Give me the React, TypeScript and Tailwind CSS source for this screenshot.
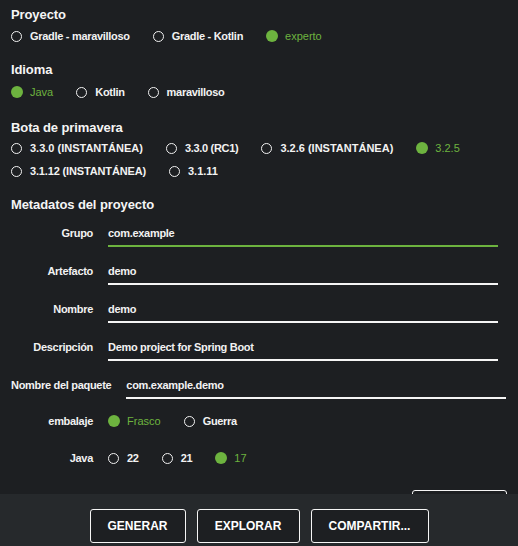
import React from "react";

const font = { fontFamily: '"Liberation Sans", Arial, sans-serif' };

type Opt = { label: string; checked?: boolean; track?: string };

function Radio({ label, checked, track = "tracking-[-0.3px]" }: Opt) {
  return (
    <span className={`flex items-center ${checked ? "gap-[7px]" : "gap-[8px]"}`}>
      {checked ? (
        <span className="h-[12px] w-[12px] rounded-full bg-[#6db33f]" />
      ) : (
        <span className="h-[11px] w-[11px] rounded-full border-[1.5px] border-[#f2f2f2]" />
      )}
      <span className={checked ? "text-[11px] text-[#6db33f]" : `text-[11px] font-bold text-[#f2f2f2] ${track}`}>
        {label}
      </span>
    </span>
  );
}

function RadioRow({ items, className = "" }: { items: Opt[]; className?: string }) {
  return (
    <div className={`flex h-[20px] items-center gap-[23px] ${className}`}>
      {items.map((o) => (
        <Radio key={o.label} {...o} />
      ))}
    </div>
  );
}

function Heading({ children, className = "" }: { children: React.ReactNode; className?: string }) {
  return (
    <h2 className={`h-[20px] text-[13px] font-bold leading-[20px] tracking-[-0.1px] text-[#f5f5f5] ${className}`}>
      {children}
    </h2>
  );
}

function Field({
  label,
  value,
  focused,
  width = "w-[390px]",
  className = "",
}: {
  label: string;
  value: string;
  focused?: boolean;
  width?: string;
  className?: string;
}) {
  return (
    <div className={`flex items-start gap-[15px] ${className}`}>
      <span className="min-w-[82px] shrink-0 whitespace-nowrap text-right text-[11px] font-bold leading-[20px] tracking-[-0.3px] text-[#f2f2f2]">
        {label}
      </span>
      <div
        className={`${width} pb-[2px] text-[11px] font-bold leading-[20px] tracking-[-0.3px] text-[#f2f2f2] border-b-2 ${
          focused ? "border-[#6db33f]" : "border-[#f5f5f5]"
        }`}
      >
        {value}
      </div>
    </div>
  );
}

function OptionField({ label, items, className = "" }: { label: string; items: Opt[]; className?: string }) {
  return (
    <div className={`flex items-center gap-[15px] ${className}`}>
      <span className="w-[82px] shrink-0 text-right text-[11px] font-bold leading-[20px] tracking-[-0.3px] text-[#f2f2f2]">
        {label}
      </span>
      <RadioRow items={items} />
    </div>
  );
}

export default function App() {
  return (
    <div className="flex h-[546px] w-full flex-col overflow-hidden bg-[#1d1f22]" style={font}>
      <div className="min-h-0 flex-1 overflow-hidden px-[11px] pt-[5px]">
        <Heading>Proyecto</Heading>
        <RadioRow
          className="mt-[1px]"
          items={[
            { label: "Gradle - maravilloso" },
            { label: "Gradle - Kotlin" },
            { label: "experto", checked: true },
          ]}
        />

        <Heading className="mt-[14px]">Idioma</Heading>
        <RadioRow
          className="mt-[2px]"
          items={[{ label: "Java", checked: true }, { label: "Kotlin" }, { label: "maravilloso" }]}
        />

        <Heading className="mt-[16px]">Bota de primavera</Heading>
        <RadioRow
          items={[
            { label: "3.3.0 (INSTANTÁNEA)", track: "tracking-normal" },
            { label: "3.3.0 (RC1)" },
            { label: "3.2.6 (INSTANTÁNEA)", track: "tracking-normal" },
            { label: "3.2.5", checked: true },
          ]}
        />
        <RadioRow
          className="mt-[3px]"
          items={[
            { label: "3.1.12 (INSTANTÁNEA)", track: "tracking-[-0.15px]" },
            { label: "3.1.11", track: "tracking-normal" },
          ]}
        />

        <Heading className="mt-[14px]">Metadatos del proyecto</Heading>
        <Field className="mt-[8px]" label="Grupo" value="com.example" focused />
        <Field className="mt-[14px]" label="Artefacto" value="demo" />
        <Field className="mt-[14px]" label="Nombre" value="demo" />
        <Field className="mt-[14px]" label="Descripción" value="Demo project for Spring Boot" />
        <Field className="mt-[14px]" label="Nombre del paquete" value="com.example.demo" width="w-[380px]" />

        <OptionField
          className="mt-[12px]"
          label="embalaje"
          items={[{ label: "Frasco", checked: true }, { label: "Guerra" }]}
        />
        <OptionField
          className="mt-[17px]"
          label="Java"
          items={[{ label: "22" }, { label: "21" }, { label: "17", checked: true }]}
        />

        <div className="mt-[22px] ml-auto h-[34px] w-[95px] rounded-[3px] border border-[#f5f5f5]" />
      </div>

      <div className="flex h-[52px] shrink-0 justify-center gap-[11px] bg-[#26292c] pt-[15px]">
        <button className="flex h-[34px] w-[96px] items-center justify-center rounded-[3px] border border-[#f5f5f5] bg-[#1d1f22] text-[12px] font-bold text-white">
          GENERAR
        </button>
        <button className="flex h-[34px] w-[103px] items-center justify-center rounded-[3px] border border-[#f5f5f5] bg-[#1d1f22] text-[12px] font-bold text-white">
          EXPLORAR
        </button>
        <button className="flex h-[34px] w-[118px] items-center justify-center rounded-[3px] border border-[#f5f5f5] bg-[#1d1f22] text-[12px] font-bold text-white">
          COMPARTIR...
        </button>
      </div>
    </div>
  );
}
